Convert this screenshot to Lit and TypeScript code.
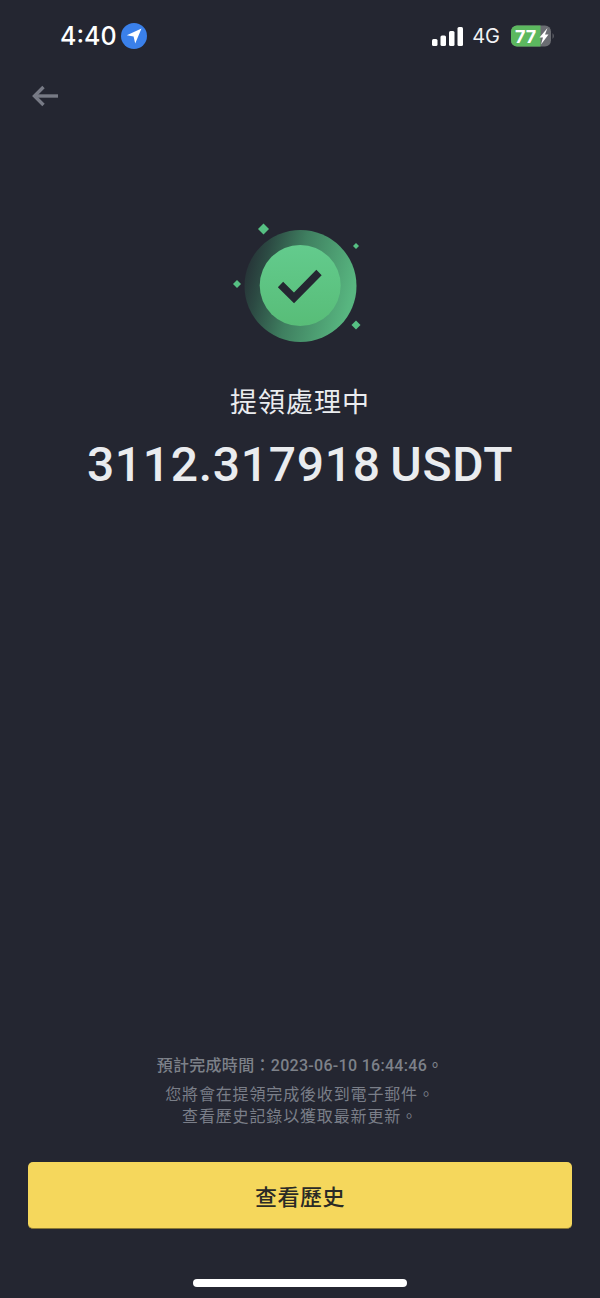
import { LitElement, html, css } from "lit";
import { customElement } from "lit/decorators.js";

@customElement("app-root")
export class AppRoot extends LitElement {
  static styles = css`
    :host { display: block; }
    .page {
      width: 600px; height: 1298px; box-sizing: border-box; overflow: hidden;
      background: #242631; color: #eaecef;
      display: flex; flex-direction: column; align-items: stretch;
      font-family: "Roboto", "Noto Sans CJK TC", sans-serif;
    }
    .status {
      height: 72px; flex: none; display: flex; justify-content: space-between; align-items: center;
      padding: 0 44px 0 60px; box-sizing: border-box;
    }
    .left, .right { display: flex; align-items: center; }
    .time { font: 500 25px/32px "Inter", "Roboto", sans-serif; color: #fff; }
    .loc { margin-left: 4px; display: block; }
    .net { font: 400 20px/24px "Inter", sans-serif; color: #f2f3f5; margin: 0 11px 0 9px; }
    .back { height: 48px; flex: none; padding-left: 30px; display: flex; align-items: center; }
    .hero { margin-top: 102px; flex: none; display: flex; justify-content: center; }
    .title {
      margin-top: 43px; text-align: center; font-size: 27px; line-height: 36px; color: #eaecef; font-weight: 400;
      letter-spacing: 1px;
    }
    .amount {
      margin-top: 14px; text-align: center; font: 500 48px/60px "Roboto", sans-serif;
      color: #eaecef; letter-spacing: 0.7px; word-spacing: -3px;
    }
    .spacer { flex: 1; }
    .note { text-align: center; color: #7a7e88; font-size: 16px; line-height: 22px; letter-spacing: 0.85px; }
    .eta { font-weight: 500; margin-bottom: 7px; color: #7d8189; letter-spacing: 0.3px; }
    .btn {
      margin: 34px 28px 0; height: 67px; flex: none; box-sizing: border-box; border-radius: 5px;
      background: #f5d75c; color: #2a2a26; border: 0; border-bottom: 1px solid #8a7a34;
      font: 500 22px/66px "Noto Sans CJK TC", sans-serif; text-align: center; letter-spacing: 0.5px;
    }
    .home { flex: none; height: 69px; display: flex; justify-content: center; padding-top: 50px; box-sizing: border-box; }
    .home div { width: 214px; height: 8px; border-radius: 4px; background: #fff; }
  `;

  render() {
    return html`<div class="page">
      <div class="status">
        <div class="left">
          <span class="time">4:40</span>
          <svg class="loc" width="26" height="26" viewBox="0 0 26 26">
            <circle cx="13" cy="13" r="13" fill="#3a80ea"/>
            <path d="M20.5 5.5 L5.8 12.2 L12.6 13.6 L14.2 20.6 Z" fill="#fff"/>
          </svg>
        </div>
        <div class="right">
          <svg width="31" height="20" viewBox="0 0 31 20">
            <rect x="0" y="13" width="5.5" height="7" rx="1.5" fill="#fff"/>
            <rect x="8.5" y="9.5" width="5.5" height="10.5" rx="1.5" fill="#fff"/>
            <rect x="17" y="5" width="5.5" height="15" rx="1.5" fill="#fff"/>
            <rect x="25.5" y="1" width="5.5" height="19" rx="1.5" fill="#fff"/>
          </svg>
          <span class="net">4G</span>
          <svg width="45" height="22" viewBox="0 0 45 22">
            <rect x="0" y="0.5" width="40" height="21" rx="6" fill="#6a6c72"/>
            <path d="M6 0.5 H29.5 V21.5 H6 A6 6 0 0 1 0 15.5 V6.5 A6 6 0 0 1 6 0.5 Z" fill="#5cb85f"/>
            <text x="4" y="17.5" font-family="Inter, sans-serif" font-size="18" font-weight="700" fill="#fff">77</text>
            <path d="M36.5 3 L28.5 12.5 H32 L30 19.5 L37.5 9.5 H34 Z" fill="#fff"/>
            <path d="M41.5 8 Q44.5 11 41.5 14 Z" fill="#5a5c63"/>
          </svg>
        </div>
      </div>
      <div class="back">
        <svg width="30" height="24" viewBox="0 0 30 24" fill="none" stroke="#777a85" stroke-width="3.4">
          <path d="M28 12 H5"/>
          <path d="M13.5 3 L4.5 12 L13.5 21"/>
        </svg>
      </div>
      <div class="hero">
        <svg width="136" height="120" viewBox="232 222 136 120">
          <defs>
            <linearGradient id="ring" x1="0" y1="0.15" x2="1" y2="0.4">
              <stop offset="0" stop-color="#242b33"/>
              <stop offset="0.2" stop-color="#2c4a43"/>
              <stop offset="0.5" stop-color="#3f7f60"/>
              <stop offset="1" stop-color="#58b680"/>
            </linearGradient>
            <linearGradient id="disc" x1="0" y1="0" x2="0" y2="1">
              <stop offset="0" stop-color="#63cb8d"/>
              <stop offset="1" stop-color="#58bd78"/>
            </linearGradient>
          </defs>
          <circle cx="300.5" cy="286" r="56" fill="url(#ring)"/>
          <circle cx="300.2" cy="285.5" r="40.5" fill="url(#disc)"/>
          <path d="M280.5 284.5 L294 298 L319 272.5" fill="none" stroke="#242631" stroke-width="7.5"/>
          <path d="M263.5 223.5 L269 229 L263.5 234.5 L258 229 Z" fill="#56c083"/>
          <path d="M356 243 L359 246 L356 249 L353 246 Z" fill="#56c083"/>
          <path d="M237 280 L241 284 L237 288 L233 284 Z" fill="#56c083"/>
          <path d="M356 320.5 L360.5 325 L356 329.5 L351.5 325 Z" fill="#56c083"/>
        </svg>
      </div>
      <div class="title">提領處理中</div>
      <div class="amount">3112.317918 USDT</div>
      <div class="spacer"></div>
      <div class="note">
        <div class="eta">預計完成時間：2023-06-10 16:44:46。</div>
        <div>您將會在提領完成後收到電子郵件。</div>
        <div>查看歷史記錄以獲取最新更新。</div>
      </div>
      <div class="btn">查看歷史</div>
      <div class="home"><div></div></div>
    </div>`;
  }
}
